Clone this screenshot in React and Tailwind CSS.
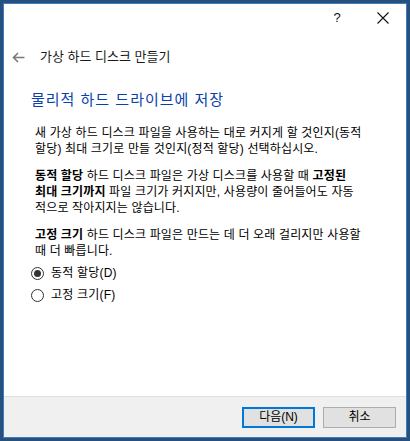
import React, { useState } from "react";

const font = { fontFamily: '"Liberation Sans", "Noto Sans CJK KR", sans-serif' };

const CloseIcon = () => (
    <svg width="12" height="12" viewBox="0 0 12 12">
        <path d="M0.5 0.5 L11.5 11.5 M11.5 0.5 L0.5 11.5" stroke="#111" strokeWidth="1.1" fill="none" />
    </svg>
);

const BackArrow = () => (
    <svg width="13" height="11" viewBox="0 0 13 11">
        <path d="M12.5 5.5 H1.5 M6 1 L1.5 5.5 L6 10" stroke="#7a7a7a" strokeWidth="1.6" fill="none" />
    </svg>
);

// 라디오 버튼
const Radio = ({ checked, label, onClick }) => (
    <div className="flex items-center h-[22px] cursor-default" onClick={onClick}>
        <span className="w-[13px] h-[13px] rounded-full border border-[#333] bg-white flex items-center justify-center">
            {checked && <span className="w-[7px] h-[7px] rounded-full bg-[#333]" />}
        </span>
        <span className="ml-[7px] text-[12px] tracking-[0.2px] text-black">{label}</span>
    </div>
);

export default function App() {
    const [mode, setMode] = useState("dynamic");

    return (
        <div style={font} className="w-[410px] h-[441px] border-[3px] border-[#27507c] bg-[#27507c]">
            <div className="w-full h-full border border-[#3d7bc2] flex flex-col bg-white">
                {/* 타이틀 바 */}
                <div className="h-[28px] flex justify-end items-center shrink-0">
                    <div className="w-[46px] h-full flex items-center justify-center text-[13px] text-[#111]">?</div>
                    <div className="w-[46px] h-full flex items-center justify-center">
                        <CloseIcon />
                    </div>
                </div>

                <div className="mt-[15px] h-[20px] flex items-center pl-[8px] shrink-0">
                    <BackArrow />
                    <span className="ml-[15px] text-[13px] text-[#1a1a1a]">가상 하드 디스크 만들기</span>
                </div>

                <h1 className="mt-[23px] pl-[27px] h-[20px] leading-[20px] text-[15px] tracking-[1px] text-[#0a3fae] shrink-0">
                    물리적 하드 드라이브에 저장
                </h1>

                <div className="mt-[15px] pl-[31px] text-[12px] leading-[16px] tracking-[0.15px] text-black whitespace-nowrap">
                    <p>
                        새 가상 하드 디스크 파일을 사용하는 대로 커지게 할 것인지(동적
                        <br />
                        할당) 최대 크기로 만들 것인지(정적 할당) 선택하십시오.
                    </p>
                    <p className="mt-[11px]">
                        <b>동적 할당</b> 하드 디스크 파일은 가상 디스크를 사용할 때 <b>고정된</b>
                        <br />
                        <b>최대 크기까지</b> 파일 크기가 커지지만, 사용량이 줄어들어도 자동
                        <br />
                        적으로 작아지지는 않습니다.
                    </p>
                    <p className="mt-[11px]">
                        <b>고정 크기</b> 하드 디스크 파일은 만드는 데 더 오래 걸리지만 사용할
                        <br />
                        때 더 빠릅니다.
                    </p>
                </div>

                <div className="mt-[3px] pl-[27px]">
                    <Radio checked={mode === "dynamic"} label="동적 할당(D)" onClick={() => setMode("dynamic")} />
                    <Radio checked={mode === "fixed"} label="고정 크기(F)" onClick={() => setMode("fixed")} />
                </div>

                <div className="flex-1" />

                {/* 하단 버튼 영역 */}
                <div className="h-[41px] shrink-0 border-t border-[#dfdfdf] bg-[#f0f0f0] flex items-center justify-end pr-[10px] gap-[8px]">
                    <button className="w-[73px] h-[21px] border-2 border-[#0078d7] bg-[#e1e1e1] text-[12px] text-black leading-none">
                        다음(N)
                    </button>
                    <button className="w-[73px] h-[21px] border border-[#adadad] bg-[#e1e1e1] text-[12px] text-black leading-none">
                        취소
                    </button>
                </div>
            </div>
        </div>
    );
}
